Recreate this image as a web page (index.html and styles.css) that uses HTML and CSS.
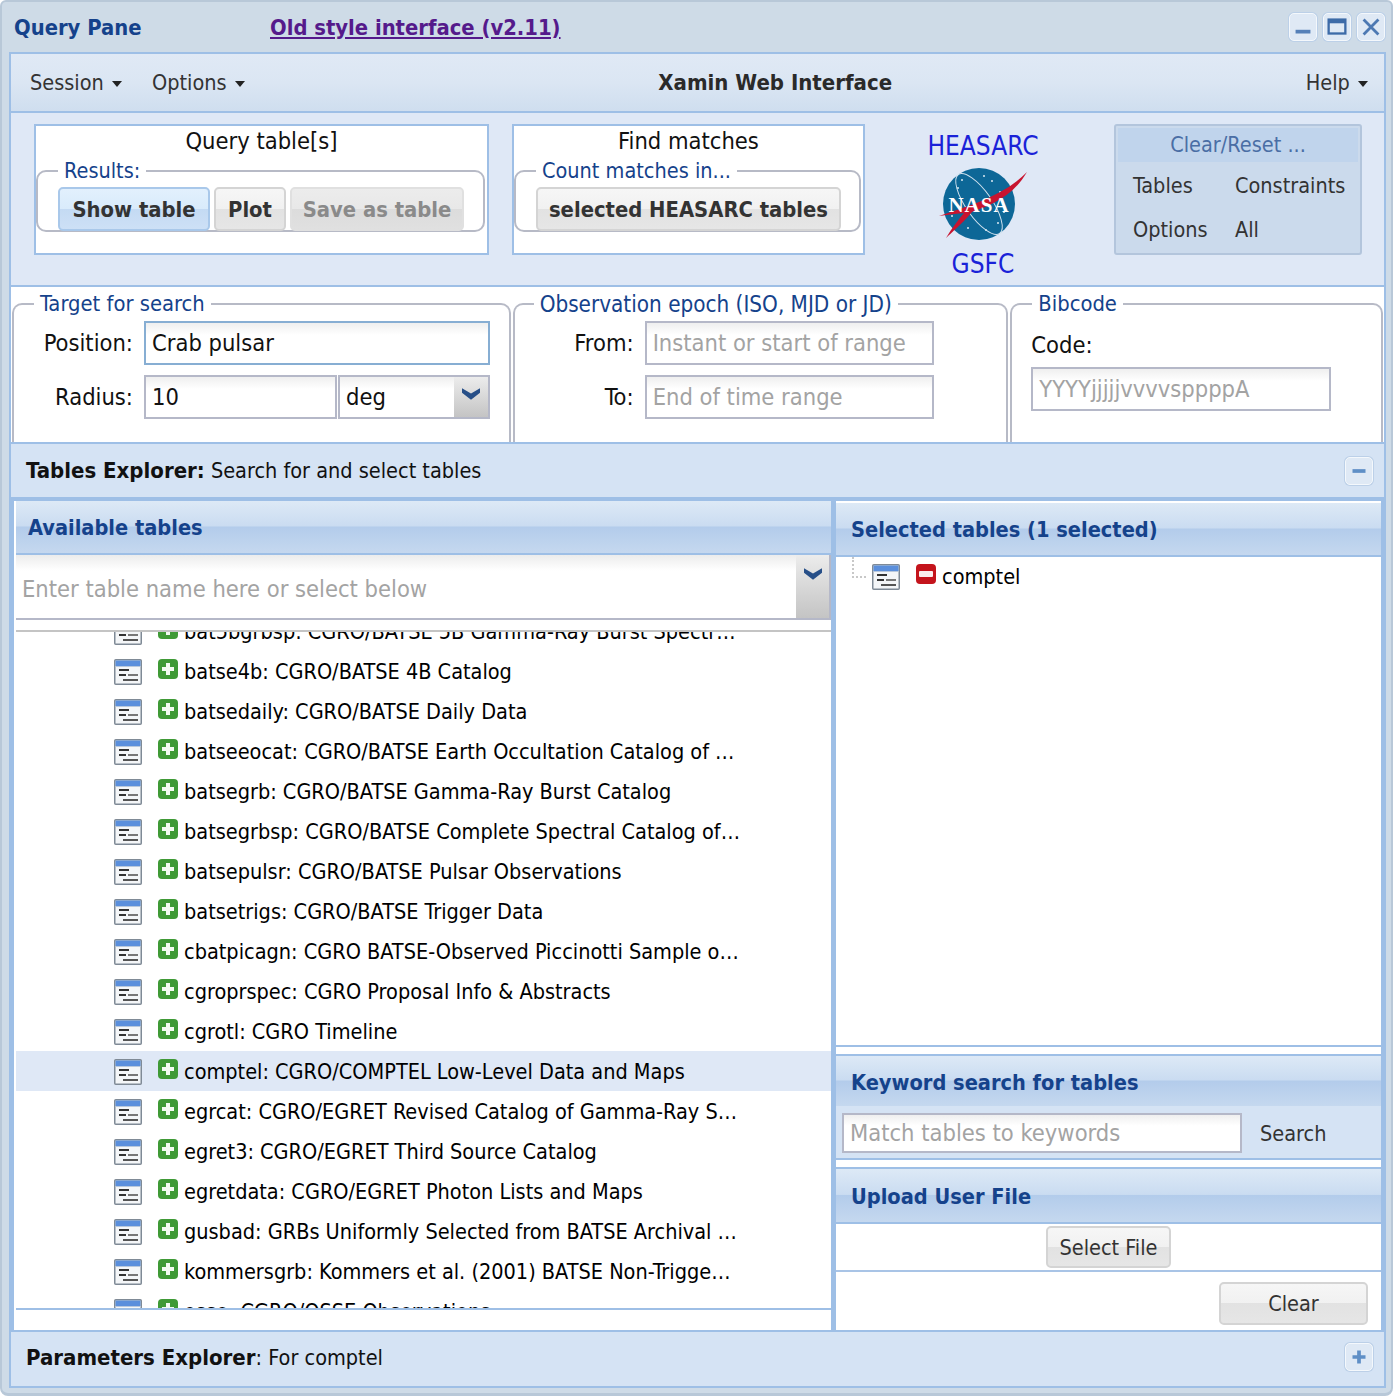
FILE: index.html
```html
<!DOCTYPE html>
<html lang="en">
<head>
<meta charset="utf-8">
<title>Xamin Web Interface</title>
<link rel="stylesheet" href="styles.css">
</head>
<body>
<svg class="defs" width="0" height="0" aria-hidden="true">
  <symbol id="tbl" viewBox="0 0 28 26">
    <rect x="0.75" y="0.75" width="26.5" height="24.5" rx="1" fill="#f4f6f8" stroke="#7f8a96" stroke-width="1.5"/>
    <rect x="1.5" y="1.5" width="25" height="5.5" fill="#5b8fdc"/>
    <rect x="1.5" y="7" width="25" height="1" fill="#b9c8dc"/>
    <rect x="5" y="10" width="10" height="2" fill="#333"/>
    <rect x="5" y="15" width="7" height="2" fill="#333"/>
    <rect x="14" y="15" width="10" height="2" fill="#777"/>
    <rect x="9" y="20" width="15" height="2" fill="#555"/>
  </symbol>
  <symbol id="add" viewBox="0 0 20 20">
    <rect width="20" height="20" rx="4" fill="#3f9a36"/>
    <path d="M8 4h4v4h4v4h-4v4H8v-4H4V8h4z" fill="#f4fbf2"/>
  </symbol>
  <symbol id="del" viewBox="0 0 20 20">
    <rect width="20" height="20" rx="4" fill="#c4141c"/>
    <rect x="3" y="7" width="14" height="6" rx="1" fill="#fbeeee"/>
  </symbol>
  <symbol id="chev" viewBox="0 0 20 13">
    <path d="M0 0l10 6 10-6v5l-10 8L0 5z" fill="#274f88"/>
  </symbol>
</svg>

<div class="window">
  <header class="titlebar">
    <span class="wintitle">Query Pane</span>
    <a class="oldlink" href="#">Old style interface (v2.11)</a>
    <div class="tools">
      <span class="tool"><svg viewBox="0 0 28 28"><rect x="6" y="17" width="16" height="4" fill="#5580b8"/></svg></span>
      <span class="tool"><svg viewBox="0 0 28 28"><rect x="5" y="6" width="18" height="15" fill="none" stroke="#3d6ba8" stroke-width="2.5"/><rect x="5" y="6" width="18" height="4" fill="#3d6ba8"/></svg></span>
      <span class="tool"><svg viewBox="0 0 28 28"><path d="M6 6l16 16M22 6L6 22" stroke="#4d79b3" stroke-width="3"/></svg></span>
    </div>
  </header>

  <div class="frame">
    <nav class="menubar">
      <span class="menu menu-session">Session <i class="caret"></i></span>
      <span class="menu">Options <i class="caret"></i></span>
      <strong class="apptitle">Xamin Web Interface</strong>
      <span class="menu">Help <i class="caret"></i></span>
    </nav>

    <section class="actions">
      <div class="actbox box-query">
        <div class="acthead">Query table[s]</div>
        <fieldset class="group">
          <legend>Results:</legend>
          <button class="btn btn-on btn-b" type="button">Show table</button>
          <button class="btn btn-b" type="button">Plot</button>
          <button class="btn btn-b btn-off" type="button">Save as table</button>
        </fieldset>
      </div>
      <div class="actbox box-find">
        <div class="acthead">Find matches</div>
        <fieldset class="group">
          <legend>Count matches in...</legend>
          <button class="btn btn-b btn-wide" type="button">selected HEASARC tables</button>
        </fieldset>
      </div>
      <div class="brand">
        <span class="brandtext">HEASARC</span>
        <svg class="nasa" viewBox="0 0 92 72">
          <circle cx="41" cy="36" r="36" fill="#0d6797"/>
          <ellipse cx="41" cy="36" rx="13" ry="36" transform="rotate(-35 41 36)" fill="none" stroke="#cfe1ee" stroke-width="1"/>
          <g fill="#d8e8f2">
            <circle cx="20" cy="20" r="1"/><circle cx="54" cy="13" r="1"/><circle cx="62" cy="24" r="1"/><circle cx="14" cy="48" r="1"/><circle cx="30" cy="60" r="1"/><circle cx="60" cy="55" r="1"/><circle cx="46" cy="8" r="1"/><circle cx="66" cy="44" r="1"/><circle cx="24" cy="12" r="1"/><circle cx="48" cy="62" r="1"/>
          </g>
          <path d="M1 48C30 38 66 28 89 4 74 30 50 38 34 44 22 58 14 64 8 70 14 60 20 52 26 45 16 46 8 47 1 48z" fill="#c8142f"/>
          <text x="41" y="44" class="nasatext" text-anchor="middle">NASA</text>
        </svg>
        <span class="brandtext">GSFC</span>
      </div>
      <div class="clearbox">
        <div class="clearhead">Clear/Reset ...</div>
        <div class="cleargrid">
          <span>Tables</span><span>Constraints</span>
          <span>Options</span><span>All</span>
        </div>
      </div>
    </section>

    <section class="criteria">
      <fieldset class="crit crit-target">
        <legend>Target for search</legend>
        <div class="critrow">
          <label class="lab">Position:</label>
          <span class="field field-on">Crab pulsar</span>
        </div>
        <div class="critrow">
          <label class="lab">Radius:</label>
          <span class="field field-radius">10</span>
          <span class="field field-unit">deg<span class="trigger"><svg><use href="#chev"/></svg></span></span>
        </div>
      </fieldset>
      <fieldset class="crit crit-epoch">
        <legend>Observation epoch (ISO, MJD or JD)</legend>
        <div class="critrow">
          <label class="lab lab-epoch">From:</label>
          <span class="field field-ph field-epoch">Instant or start of range</span>
        </div>
        <div class="critrow">
          <label class="lab lab-epoch">To:</label>
          <span class="field field-ph field-epoch">End of time range</span>
        </div>
      </fieldset>
      <fieldset class="crit crit-bib">
        <legend>Bibcode</legend>
        <label class="lab lab-code">Code:</label>
        <span class="field field-ph field-code">YYYYjjjjjvvvvsppppA</span>
      </fieldset>
    </section>

    <div class="explorer explorer-tables">
      <span><b>Tables Explorer:</b> Search for and select tables</span>
      <span class="tool tool-sm"><svg viewBox="0 0 28 28"><rect x="7" y="12" width="14" height="4" fill="#5f8fc6"/></svg></span>
    </div>

    <div class="columns">
      <section class="col col-left">
        <h2 class="phead phead-avail">Available tables</h2>
        <div class="combo">
          <span class="combotext">Enter table name here or select below</span>
          <span class="combotrig"><svg><use href="#chev"/></svg></span>
        </div>
        <div class="strip"></div>
        <div class="listview">
          <ul class="list">
            <li class="row"><svg class="ti"><use href="#tbl"/></svg><svg class="ai"><use href="#add"/></svg><span>bat5bgrbsp: CGRO/BATSE 5B Gamma-Ray Burst Spectr…</span></li>
            <li class="row"><svg class="ti"><use href="#tbl"/></svg><svg class="ai"><use href="#add"/></svg><span>batse4b: CGRO/BATSE 4B Catalog</span></li>
            <li class="row"><svg class="ti"><use href="#tbl"/></svg><svg class="ai"><use href="#add"/></svg><span>batsedaily: CGRO/BATSE Daily Data</span></li>
            <li class="row"><svg class="ti"><use href="#tbl"/></svg><svg class="ai"><use href="#add"/></svg><span>batseeocat: CGRO/BATSE Earth Occultation Catalog of …</span></li>
            <li class="row"><svg class="ti"><use href="#tbl"/></svg><svg class="ai"><use href="#add"/></svg><span>batsegrb: CGRO/BATSE Gamma-Ray Burst Catalog</span></li>
            <li class="row"><svg class="ti"><use href="#tbl"/></svg><svg class="ai"><use href="#add"/></svg><span>batsegrbsp: CGRO/BATSE Complete Spectral Catalog of…</span></li>
            <li class="row"><svg class="ti"><use href="#tbl"/></svg><svg class="ai"><use href="#add"/></svg><span>batsepulsr: CGRO/BATSE Pulsar Observations</span></li>
            <li class="row"><svg class="ti"><use href="#tbl"/></svg><svg class="ai"><use href="#add"/></svg><span>batsetrigs: CGRO/BATSE Trigger Data</span></li>
            <li class="row"><svg class="ti"><use href="#tbl"/></svg><svg class="ai"><use href="#add"/></svg><span>cbatpicagn: CGRO BATSE-Observed Piccinotti Sample o…</span></li>
            <li class="row"><svg class="ti"><use href="#tbl"/></svg><svg class="ai"><use href="#add"/></svg><span>cgroprspec: CGRO Proposal Info &amp; Abstracts</span></li>
            <li class="row"><svg class="ti"><use href="#tbl"/></svg><svg class="ai"><use href="#add"/></svg><span>cgrotl: CGRO Timeline</span></li>
            <li class="row row-sel"><svg class="ti"><use href="#tbl"/></svg><svg class="ai"><use href="#add"/></svg><span>comptel: CGRO/COMPTEL Low-Level Data and Maps</span></li>
            <li class="row"><svg class="ti"><use href="#tbl"/></svg><svg class="ai"><use href="#add"/></svg><span>egrcat: CGRO/EGRET Revised Catalog of Gamma-Ray S…</span></li>
            <li class="row"><svg class="ti"><use href="#tbl"/></svg><svg class="ai"><use href="#add"/></svg><span>egret3: CGRO/EGRET Third Source Catalog</span></li>
            <li class="row"><svg class="ti"><use href="#tbl"/></svg><svg class="ai"><use href="#add"/></svg><span>egretdata: CGRO/EGRET Photon Lists and Maps</span></li>
            <li class="row"><svg class="ti"><use href="#tbl"/></svg><svg class="ai"><use href="#add"/></svg><span>gusbad: GRBs Uniformly Selected from BATSE Archival …</span></li>
            <li class="row"><svg class="ti"><use href="#tbl"/></svg><svg class="ai"><use href="#add"/></svg><span>kommersgrb: Kommers et al. (2001) BATSE Non-Trigge…</span></li>
            <li class="row"><svg class="ti"><use href="#tbl"/></svg><svg class="ai"><use href="#add"/></svg><span>osse: CGRO/OSSE Observations</span></li>
          </ul>
        </div>
        <div class="listfoot"></div>
      </section>

      <section class="col col-right">
        <h2 class="phead phead-sel">Selected tables (1 selected)</h2>
        <div class="seltree">
          <span class="elbow"></span>
          <svg class="ti ti-sel"><use href="#tbl"/></svg>
          <svg class="ai ai-del"><use href="#del"/></svg>
          <span>comptel</span>
        </div>
        <div class="gap"></div>
        <h2 class="phead phead-kw">Keyword search for tables</h2>
        <div class="kwbody">
          <span class="field field-ph field-kw">Match tables to keywords</span>
          <span class="kwsearch">Search</span>
        </div>
        <div class="gap"></div>
        <h2 class="phead phead-up">Upload User File</h2>
        <div class="upbody"><button class="btn btn-file" type="button">Select File</button></div>
        <div class="clearbar"><button class="btn btn-clear" type="button">Clear</button></div>
      </section>
    </div>

    <div class="explorer explorer-params">
      <span><b>Parameters Explorer</b>: For comptel</span>
      <span class="tool tool-sm"><svg viewBox="0 0 28 28"><path d="M12 7h4v5h5v4h-5v5h-4v-5H7v-4h5z" fill="#5f8fc6"/></svg></span>
    </div>
  </div>
</div>
</body>
</html>
```
FILE: styles.css
```css
* { box-sizing: border-box; }
html, body { margin: 0; padding: 0; }
body {
  width: 1397px;
  height: 1396px;
  overflow: hidden;
  background: #fff;
  font-family: "DejaVu Sans Condensed", "DejaVu Sans", sans-serif;
  font-stretch: condensed;
  font-size: 21.5px;
  color: #000;
}
b, strong { font-size: 22px; }
.defs { display: block; height: 0; }
.window {
  width: 1393px;
  height: 1396px;
  background: #cedbe7;
  border: 2px solid #b8c8d8;
  border-bottom-width: 3px;
  border-radius: 6px 6px 8px 8px;
  display: flex;
  flex-direction: column;
  padding: 0 5px 5px 6px;
}
.titlebar {
  height: 50px;
  display: flex;
  align-items: center;
  flex: none;
  padding-left: 6px;
  font-weight: bold;
}
.wintitle { width: 256px; color: #15428b; font-size: 21.8px; }
.oldlink { color: #551a8b; font-size: 21.8px; }
.tools { margin-left: auto; display: flex; gap: 6px; margin-right: 1px; }
.tool {
  display: block;
  width: 28px;
  height: 28px;
  background: #dfe9f5;
  border: 1px solid #f4f8fc;
  border-radius: 5px;
  box-shadow: 0 0 0 1px #bcd0e8;
}
.tool svg { display: block; width: 100%; height: 100%; }

.frame {
  flex: 1;
  display: flex;
  flex-direction: column;
  min-height: 0;
  border: 2px solid #9ebfe6;
  border-top: 0;
  background: #dfe8f6;
  width: 1377px;
  margin-left: 1px;
  overflow: hidden;
}
.menubar {
  flex: none;
  height: 61px;
  display: flex;
  align-items: center;
  padding: 0 16px 0 19px;
  gap: 30px;
  border-top: 2px solid #9ebfe6;
  border-bottom: 2px solid #9ebfe6;
  background: linear-gradient(#e0e9f5, #dbe6f3 50%, #cfdeef);
  color: #333;
}
.apptitle { margin: 0 auto; color: #2a2a2a; }
.caret {
  display: inline-block;
  width: 0;
  height: 0;
  margin-left: 2px;
  vertical-align: 3px;
  border: 5px solid transparent;
  border-top: 6px solid #222;
  border-bottom: 0;
}

.actions {
  flex: none;
  height: 172px;
  display: flex;
  padding: 11px 0 0 23px;
  background: #dfe8f6;
}
.actbox {
  height: 131px;
  background: #fff;
  border: 2px solid #9ebfe6;
  padding: 0;
  text-align: center;
}
.box-query { width: 455px; }
.box-find { width: 353px; margin-left: 23px; }
.acthead { height: 33px; line-height: 30px; color: #111; font-size: 23.5px; }
.group {
  margin: 0;
  height: 73px;
  padding: 0 0 0 20px;
  border: 2px solid #b7bac6;
  border-radius: 10px;
  text-align: left;
  width: calc(100% - 2px);
  display: flex;
  gap: 4px;
}
.group legend {
  color: #15428b;
  padding: 0 6px;
  margin-left: 0;
  line-height: 24px;
  height: 24px;
}
.btn {
  font: inherit;
  font-stretch: condensed;
  color: #333;
  height: 44px;
  padding: 0;
  white-space: nowrap;
  border: 2px solid #d4d4d4;
  border-radius: 5px;
  background: linear-gradient(#f6f6f6, #f1f1f1 50%, #e2e2e2 50%, #e6e6e6);
}
.btn-b { font-weight: bold; font-size: 21.8px; margin-top: 4px; }
.btn-on { width: 152px; background: linear-gradient(#e2f0fd, #d9ebfb 50%, #c4daf3 50%, #cde0f6); border-color: #a9c8ea; }
.btn-off { color: #8a8a8a; width: 174px; background: linear-gradient(#ececec, #e8e8e8 50%, #dcdcdc 50%, #e0e0e0); border-color: #e0e0e0; }
.btn-b:nth-of-type(2) { width: 72px; }
.btn-wide { width: 305px; }

.brand {
  width: 178px;
  margin: -1px 0 0 29px;
  height: 170px;
  display: flex;
  flex-direction: column;
  align-items: center;
  padding-top: 8px;
  color: #1a22d8;
  font-size: 26px;
}
.brandtext { line-height: 30px; }
.nasa { width: 92px; height: 72px; margin: 7px 0 9px 2px; flex: none; }
.nasatext { font-family: "Liberation Serif", serif; font-weight: bold; font-size: 21px; fill: #fff; letter-spacing: 1px; font-stretch: normal; }
.clearbox {
  width: 248px;
  height: 131px;
  border: 2px solid #b3c5dc;
  border-radius: 3px;
  padding: 2px;
  margin-left: 42px;
  background: #cbdaec;
  color: #333;
}
.clearhead {
  height: 34px;
  line-height: 34px;
  text-align: center;
  background: #c0d4ec;
  color: #4a6ea5;
}
.cleargrid {
  display: grid;
  grid-template-columns: 102px 1fr;
  grid-auto-rows: 44px;
  padding: 1px 0 0 15px;
  align-items: center;
}

.criteria {
  flex: none;
  height: 159px;
  display: flex;
  gap: 2px;
  padding: 4px 1px 0 1px;
  border-top: 2px solid #9ebfe6;
  border-bottom: 2px solid #9ebfe6;
  background: #fff;
}
.crit {
  margin: 0;
  padding: 4px 0 0;
  height: 151px;
  border: 2px solid #b7bac6;
  border-bottom: 0;
  border-radius: 10px 10px 0 0;
}
.crit legend { color: #15428b; padding: 0 6px; margin-left: 20px; line-height: 26px; height: 26px; font-size: 21.8px; }
.crit-target { width: 499px; }
.crit-epoch { width: 496px; }
.crit-epoch legend { font-size: 22.3px; margin-left: 19px; }
.crit-bib { width: 373px; }
.critrow { display: flex; align-items: center; height: 44px; margin-bottom: 10px; }
.lab { display: block; color: #111; text-align: right; width: 119px; margin-right: 11px; font-size: 23.5px; }
.lab-code { text-align: left; padding: 10px 0 0 19px; width: auto; line-height: 28px; height: 46px; margin: 0; }
.field {
  display: flex;
  align-items: center;
  height: 44px;
  padding: 0 6px;
  border: 2px solid #b5b8c8;
  background: linear-gradient(#efefef, #fff 30%);
  color: #111;
  flex: none;
  font-size: 23.5px;
}
.field-on { width: 346px; border-color: #87aed3; }
.field-radius { width: 193px; }
.field-unit { width: 152px; margin-left: 1px; }
.trigger {
  margin-left: auto;
  margin-right: -6px;
  width: 34px;
  height: 40px;
  background: linear-gradient(#ececec, #c4c4c4);
  display: flex;
  justify-content: center;
  padding-top: 11px;
}
.trigger svg { width: 18px; height: 12px; }
.field-ph { color: #a3a3a3; }
.field-epoch { width: 289px; }
.field-code { width: 300px; margin-left: 19px; }

.explorer {
  flex: none;
  height: 53px;
  display: flex;
  align-items: center;
  justify-content: space-between;
  padding: 0 11px 0 15px;
  background: #d5e3f4;
  color: #111;
}
.explorer-params { height: 56px; border-top: 2px solid #9ebfe6; padding-bottom: 4px; }

.columns {
  flex: none;
  display: flex;
  height: 833px;
  background: #9ebfe6;
  padding: 4px 2px 0 3px;
  gap: 3px;
}
.col { display: flex; flex-direction: column; background: #fff; overflow: hidden; }
.col-left { width: 819px; border-left: 2px solid #fff; border-right: 2px solid #9ebfe6; }
.col-right { width: 545px; padding-top: 2px; }
.phead {
  flex: none;
  margin: 0;
  padding-left: 12px;
  font-size: 21.6px;
  font-weight: bold;
  color: #15428b;
  display: flex;
  align-items: center;
  border-bottom: 2px solid #9ebfe6;
  background: linear-gradient(#dde9f6, #cadcf1 48%, #b3cceb 50%, #c5d8ef);
}
.phead-avail { height: 54px; margin-left: -2px; padding-left: 14px; }
.phead-sel { height: 54px; padding-left: 15px; }
.phead-kw { height: 50px; padding: 2px 0 0 15px; border-bottom: 0; }
.phead-up { height: 55px; padding: 2px 0 0 15px; }
.combo {
  flex: none;
  height: 65px;
  display: flex;
  align-items: center;
  border-bottom: 2px solid #b5b8c8;
  background: linear-gradient(#ececec, #fff 25%);
  border-right: 2px solid #b5b8c8;
}
.combotext { flex: 1; color: #a3a3a3; padding: 4px 0 0 6px; font-size: 23.5px; }
.combotrig {
  width: 33px;
  height: 100%;
  padding-top: 13px;
  display: flex;
  justify-content: center;
  background: linear-gradient(#ececec, #c4c4c4);
}
.combotrig svg { width: 18px; height: 12px; }
.strip { flex: none; height: 12px; background: #fff; border-bottom: 2px solid #c4c4c4; }
.listview { flex: none; height: 678px; overflow: hidden; border-bottom: 2px solid #9ebfe6; }
.list { list-style: none; margin: -21px 0 0; padding: 0; }
.row {
  height: 40px;
  display: flex;
  align-items: center;
  padding-left: 98px;
  white-space: nowrap;
}
.row-sel { background: #dfe8f6; }
.ti { width: 28px; height: 26px; flex: none; margin-top: 1px; }
.ai { width: 20px; height: 20px; flex: none; margin: -4px 6px 0 16px; }
.listfoot { flex: 1; }
.seltree {
  flex: none;
  height: 490px;
  display: flex;
  align-items: flex-start;
  padding: 7px 0 0 36px;
  position: relative;
  border-bottom: 2px solid #9ebfe6;
  line-height: 26px;
}
.elbow {
  position: absolute;
  left: 16px;
  top: 0;
  width: 14px;
  height: 21px;
  border-left: 2px dotted #c8c8c8;
  border-bottom: 2px dotted #c8c8c8;
}
.ti-sel { margin-top: 0; }
.ai-del { margin: 0 6px 0 16px; }
.gap { flex: none; height: 9px; background: #fff; border-bottom: 2px solid #9ebfe6; }
.kwbody {
  flex: none;
  height: 54px;
  display: flex;
  align-items: center;
  padding: 2px 0 0 6px;
  background: #d5e3f4;
  border-bottom: 2px solid #9ebfe6;
  color: #333;
}
.field-kw { width: 400px; height: 40px; }
.kwsearch { margin-left: 18px; }
.upbody {
  flex: none;
  height: 48px;
  display: flex;
  justify-content: center;
  align-items: center;
  border-bottom: 2px solid #a9c4e6;
}
.btn-file { height: 42px; width: 125px; }
.clearbar { flex: 1; display: flex; justify-content: flex-end; padding: 10px 13px 0 0; }
.btn-clear { width: 149px; height: 43px; }
```
